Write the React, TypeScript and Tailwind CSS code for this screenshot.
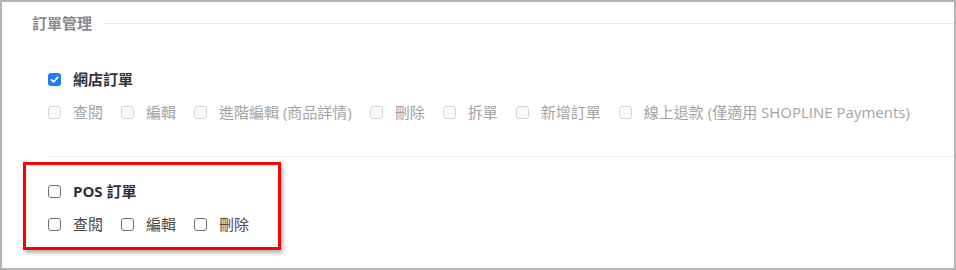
import React from 'react';

type Opt = { label: string };

const webOptions: Opt[] = [
  { label: '查閱' },
  { label: '編輯' },
  { label: '進階編輯 (商品詳情)' },
  { label: '刪除' },
  { label: '拆單' },
  { label: '新增訂單' },
  { label: '線上退款 (僅適用 SHOPLINE Payments)' },
];

const posOptions: Opt[] = [{ label: '查閱' }, { label: '編輯' }, { label: '刪除' }];

function Box({ state }: { state: 'checked' | 'off' | 'disabled' }) {
  if (state === 'checked') {
    return (
      <span className="flex h-[13px] w-[13px] shrink-0 items-center justify-center rounded-[3px] bg-[#1f7cf4]">
        <svg viewBox="0 0 12 12" className="h-[11px] w-[11px]">
          <path d="M2.6 6.3 L5 8.6 L9.4 3.6" fill="none" stroke="#fff" strokeWidth="1.9" strokeLinecap="round" strokeLinejoin="round" />
        </svg>
      </span>
    );
  }
  if (state === 'disabled') {
    return <span className="h-[13px] w-[13px] shrink-0 rounded-[3px] border border-[#d4d4d4] bg-[#fafafa]" />;
  }
  return <span className="h-[13px] w-[13px] shrink-0 rounded-[3px] border border-[#6f6f6f] bg-white" />;
}

function OptionRow({ options, disabled }: { options: Opt[]; disabled?: boolean }) {
  return (
    <div className="flex h-5 items-center gap-[18px]">
      {options.map((o) => (
        <label key={o.label} className="flex items-center gap-3 whitespace-nowrap">
          <Box state={disabled ? 'disabled' : 'off'} />
          <span className={disabled ? 'text-[#a3a3a3]' : 'text-[#4a4a4a]'}>{o.label}</span>
        </label>
      ))}
    </div>
  );
}

export default function App() {
  return (
    <div
      className="relative h-[270px] w-[956px] overflow-hidden border-2 border-[#b3b3b3] bg-white text-[15px] leading-5"
      style={{ fontFamily: '"Open Sans", "Noto Sans CJK TC", sans-serif' }}
    >
      <div className="flex items-center pl-[30px] pt-3">
        <h2 className="text-[15px] font-bold leading-[18px] text-[#8a8a8a]">訂單管理</h2>
        <div className="ml-3 h-px flex-1 bg-[#ebebeb]" />
      </div>

      <div className="pl-[46px]">
        <div className="mt-[37px] flex h-5 items-center gap-3">
          <Box state="checked" />
          <span className="font-bold text-[#333]">網店訂單</span>
        </div>
        <div className="mt-[13px]">
          <OptionRow options={webOptions} disabled />
        </div>
      </div>

      <div className="ml-[46px] mt-[34px] h-px bg-[#ebebeb]" />

      <div className="pl-[46px]">
        <div className="mt-6 flex h-5 items-center gap-3">
          <Box state="off" />
          <span className="font-bold text-[#2c3140]">POS 訂單</span>
        </div>
        <div className="mt-[13px]">
          <OptionRow options={posOptions} />
        </div>
      </div>

      {/* annotation highlight */}
      <div className="pointer-events-none absolute left-[21px] top-[160px] h-[88px] w-[258px] border-[3px] border-[#ff0000] shadow-[2px_3px_4px_rgba(0,0,0,0.3)]" />
    </div>
  );
}
